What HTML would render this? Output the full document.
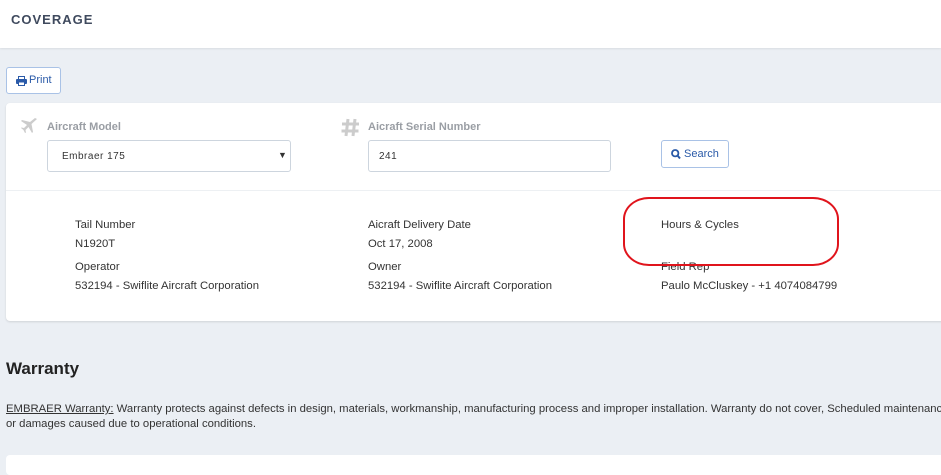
<!DOCTYPE html>
<html><head><meta charset="utf-8"><style>
body{margin:0;width:941px;height:468px;overflow:hidden;background:#ebeff4;font-family:"Liberation Sans",sans-serif;position:relative}
.a{position:absolute;white-space:nowrap}
.hdr{position:absolute;left:0;top:0;width:941px;height:48px;background:#fff;box-shadow:0 1px 2px rgba(0,0,0,.08)}
.card{position:absolute;left:6px;top:103px;width:960px;height:218px;background:#fff;border-radius:4px;box-shadow:0 1px 2px rgba(0,0,0,.12)}
.lbl{font-size:11.3px;color:#333}
.gl{font-size:11px;font-weight:bold;color:#9a9ea4}
.inp{position:absolute;background:#fff;border:1px solid #cdd5de;border-radius:3px;font-size:10px;color:#333;letter-spacing:.5px}
.btn{position:absolute;border:1px solid #a9c2e6;border-radius:3px;background:#fff;color:#2a5aa8;font-size:11px}
</style></head><body>
<div class="hdr"></div>
<div class="a" style="left:11px;top:12px;font-size:13px;font-weight:bold;color:#3f4a5e;letter-spacing:1px">COVERAGE</div>
<div class="btn" style="left:6px;top:67px;width:53px;height:25px"><svg style="position:absolute;left:9px;top:8px" width="11" height="10" viewBox="0 0 11 10"><rect x="2.5" y="0.5" width="6" height="3" fill="none" stroke="#2a5aa8"/><rect x="0" y="3" width="11" height="5" rx="1" fill="#2a5aa8"/><rect x="2.5" y="6" width="6" height="3.5" fill="#fff" stroke="#2a5aa8"/></svg><span class="a" style="left:22px;top:6px">Print</span></div>
<div class="card"></div>
<svg class="a" style="left:20px;top:118px" width="18" height="17" viewBox="0 0 18 17"><path d="M17 1 L15 0 L10 4 L2 2 L1 3 L7 7 L4 10 L1.5 9.5 L1 10 L3.5 12 L5 15 L6 14.5 L5.5 12 L8.5 9 L12 15 L13 14 L11.5 6 Z" fill="#ccc"/></svg>
<div class="a gl" style="left:47px;top:121px">Aircraft Model</div>
<div class="inp" style="left:47px;top:140px;width:242px;height:30px"><span class="a" style="left:14px;top:10px">Embraer 175</span><span class="a" style="left:230px;top:9px;font-size:9px;color:#333">▼</span></div>
<svg class="a" style="left:341px;top:118px" width="19" height="19" viewBox="0 0 19 19"><path d="M7 1 L5 18 M14 1 L12 18 M1 6 H18 M0.5 13 H17.5" stroke="#ccc" stroke-width="3"/></svg>
<div class="a gl" style="left:368px;top:121px">Aicraft Serial Number</div>
<div class="inp" style="left:368px;top:140px;width:241px;height:30px"><span class="a" style="left:10px;top:10px">241</span></div>
<div class="btn" style="left:661px;top:140px;width:66px;height:26px"><svg style="position:absolute;left:9px;top:8px" width="10" height="11" viewBox="0 0 10 11"><circle cx="4.2" cy="4.2" r="3.2" fill="none" stroke="#2a5aa8" stroke-width="1.8"/><path d="M6.5 6.5 L9 9.5" stroke="#2a5aa8" stroke-width="2"/></svg><span class="a" style="left:22px;top:7px">Search</span></div>
<div class="a" style="left:6px;top:190px;width:935px;height:1px;background:#edf0f3"></div>
<div class="a lbl" style="left:75px;top:219px">Tail Number</div>
<div class="a lbl" style="left:75px;top:238px">N1920T</div>
<div class="a lbl" style="left:75px;top:261px">Operator</div>
<div class="a lbl" style="left:75px;top:280px">532194 - Swiflite Aircraft Corporation</div>
<div class="a lbl" style="left:368px;top:219px">Aicraft Delivery Date</div>
<div class="a lbl" style="left:368px;top:238px">Oct 17, 2008</div>
<div class="a lbl" style="left:368px;top:261px">Owner</div>
<div class="a lbl" style="left:368px;top:280px">532194 - Swiflite Aircraft Corporation</div>
<div class="a lbl" style="left:661px;top:219px">Hours &amp; Cycles</div>
<div class="a lbl" style="left:661px;top:261px">Field Rep</div>
<div class="a lbl" style="left:661px;top:280px">Paulo McCluskey - +1 4074084799</div>
<div class="a" style="left:623px;top:197px;width:212px;height:65px;border:2.5px solid #e0141c;border-radius:26px/22px"></div>
<div class="a" style="left:6px;top:359px;font-size:17px;font-weight:bold;color:#222">Warranty</div>
<div class="a" style="left:6px;top:402px;font-size:11.3px;color:#333;line-height:15px"><u>EMBRAER Warranty:</u> Warranty protects against defects in design, materials, workmanship, manufacturing process and improper installation. Warranty do not cover, Scheduled maintenance<br>or damages caused due to operational conditions.</div>
<div class="a" style="left:6px;top:455px;width:960px;height:20px;background:#fff;border-radius:4px"></div>
</body></html>
